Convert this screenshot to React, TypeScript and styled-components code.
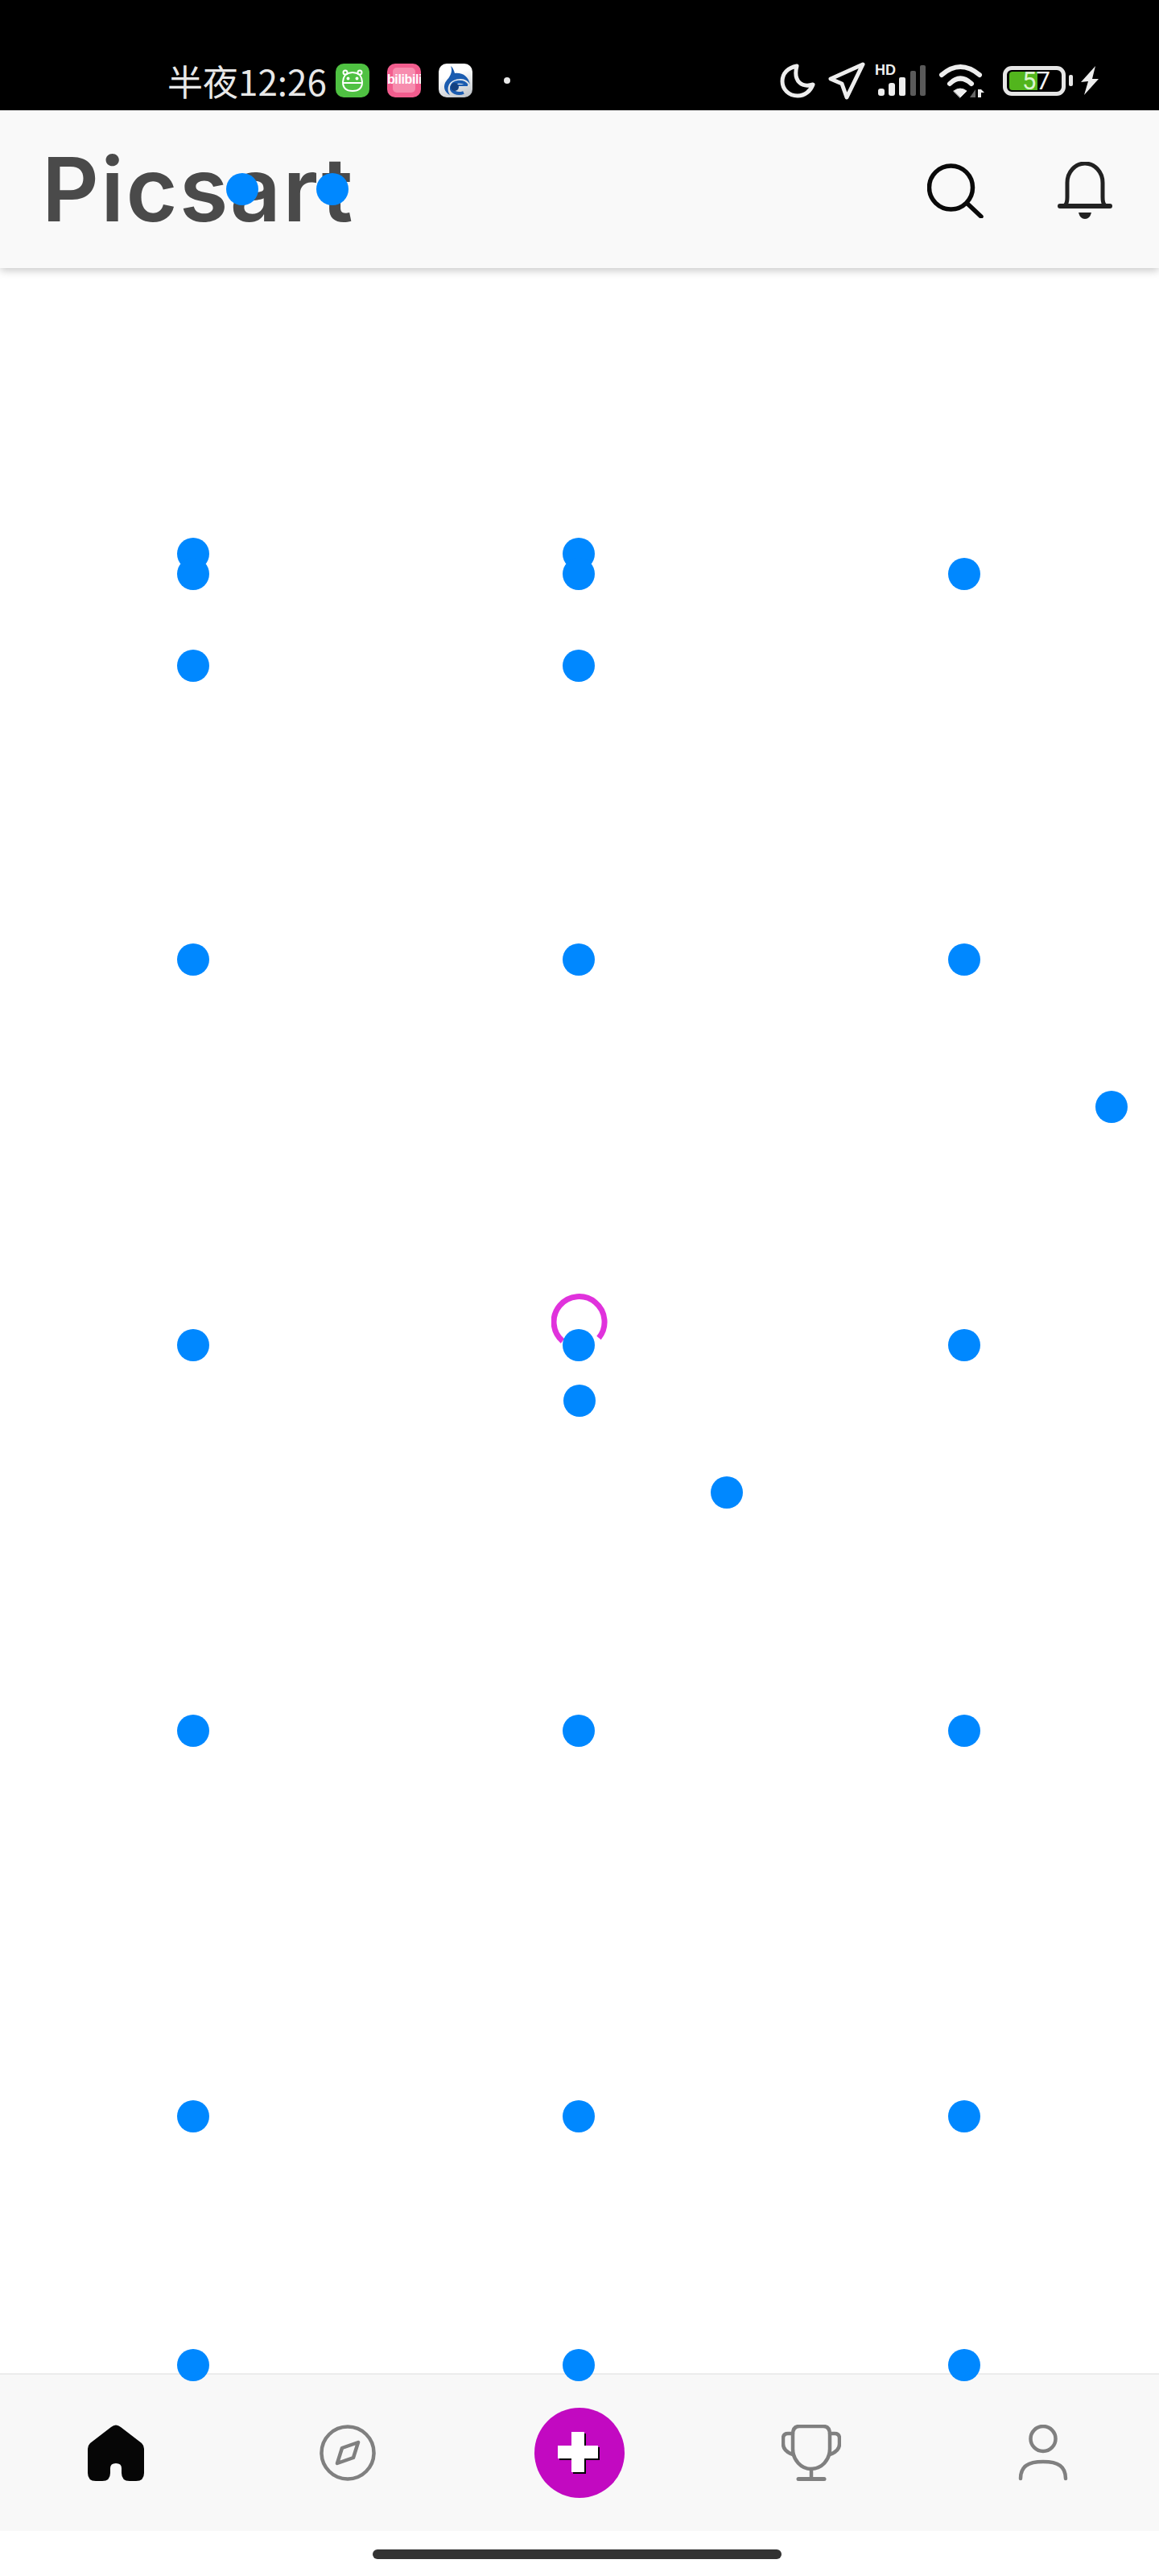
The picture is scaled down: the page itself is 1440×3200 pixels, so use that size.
import React from 'react';
import styled, { createGlobalStyle } from 'styled-components';

const PINS = [
    [301, 235], [413, 235],
    [240, 688], [240, 713], [240, 827],
    [719, 688], [719, 713], [719, 827],
    [1198, 713],
    [240, 1192], [719, 1192], [1198, 1192],
    [1381, 1375],
    [240, 1671], [719, 1671], [1198, 1671],
    [720, 1740], [903, 1854],
    [240, 2150], [719, 2150], [1198, 2150],
    [240, 2629], [719, 2629], [1198, 2629],
    [240, 2938], [719, 2938], [1198, 2938],
];

function App() {
    return (
        <Page>
            <GlobalStyle />
            <StatusBar>
                <Clock>半夜12:26</Clock>
                <AppBadges>
                    <AppBadge $bg="#4fc142">
                        <svg width="42" height="42" viewBox="0 0 42 42" fill="none" stroke="#fff" strokeWidth="2">
                            <path d="M12 14 Q21 8 30 14 Q33 18 33 23 Q33 34 21 34 Q9 34 9 23 Q9 18 12 14Z" />
                            <path d="M9 24 H33" />
                            <circle cx="12" cy="11" r="2.5" />
                            <circle cx="30" cy="11" r="2.5" />
                            <circle cx="15.5" cy="18.5" r="1" fill="#fff" />
                            <circle cx="26.5" cy="18.5" r="1" fill="#fff" />
                        </svg>
                    </AppBadge>
                    <AppBadge $bg="#f25d8e">
                        <BiliScreen />
                        <BiliText>bilibili</BiliText>
                    </AppBadge>
                    <AppBadge $bg="linear-gradient(160deg, #ffffff 35%, #b9bec4 100%)">
                        <svg width="42" height="42" viewBox="0 0 42 42" fill="none">
                            <path d="M15 3 C17 8 16 12 13 17 C11 20 7 23 7 29 C7 33 10 37 14 39 C11 34 11 30 13 26 C15 22 21 19 27 19 C33 19 37 22 39 26 C37 16 30 11 20 12 C19 9 18 5 15 3Z" fill="#1b5cb0" />
                            <path d="M35 27 C31 21 18 21 16 29 C15 35 23 39 31 36" stroke="#1b5cb0" strokeWidth="4" />
                            <path d="M24 27 H36" stroke="#1b5cb0" strokeWidth="2" />
                            <circle cx="20" cy="29" r="5" fill="#14407f" />
                        </svg>
                    </AppBadge>
                </AppBadges>
                <StatusDot />
                <StatusTray>
                    <TrayIcon width="44" height="44" viewBox="0 0 44 44" fill="none" stroke="#eee" strokeWidth="5" strokeLinejoin="round">
                        <path d="M21 4 C10 6 3 13 3 23 C3 33 11 41 22 41 C31 41 38 35 41 27 C28 31 16 24 21 4Z" />
                    </TrayIcon>
                    <TrayIcon $left={16} width="46" height="47" viewBox="0 0 46 47" fill="none" stroke="#eee" strokeWidth="5" strokeLinejoin="round">
                        <path d="M43 3 L3 21 L17 27 L23 44Z" />
                    </TrayIcon>
                    <TrayIcon $left={12} width="64" height="44" viewBox="0 0 64 44">
                        <HdLabel x="0" y="15">HD</HdLabel>
                        <rect x="4" y="32" width="8" height="9" rx="3" fill="#eee" />
                        <rect x="17" y="25" width="8" height="16" rx="3" fill="#eee" />
                        <rect x="30" y="18" width="8" height="23" rx="2" fill="#eee" />
                        <rect x="44" y="10" width="7" height="31" rx="2" fill="#5a5a5a" />
                        <rect x="56" y="3" width="7" height="38" rx="2" fill="#5a5a5a" />
                    </TrayIcon>
                    <TrayIcon $left={16} width="58" height="44" viewBox="0 0 58 44" fill="none" stroke="#eee" strokeWidth="6" strokeLinecap="round">
                        <path d="M3 15 Q26 -5 50 15" />
                        <path d="M13 26 Q26 13 40 26" />
                        <path d="M18 35 Q26 29 34 35 L26 43Z" fill="#eee" strokeWidth="1" />
                        <path d="M45 33 V43 H38Z" fill="#666" stroke="none" />
                        <path d="M48 43 V33 H52 L56 37 H52 V43Z" fill="#eee" stroke="none" />
                    </TrayIcon>
                    <Battery>
                        <BatteryFill />
                        <BatteryLevel><span>5</span>7</BatteryLevel>
                    </Battery>
                    <BatteryTip />
                    <TrayIcon $left={10} width="23" height="36" viewBox="0 0 23 36">
                        <path d="M18 0 L0 20 L9 19 L4 36 L22 16 L14 16Z" fill="#eee" />
                    </TrayIcon>
                </StatusTray>
            </StatusBar>

            <Header>
                <Logo>Picsart</Logo>
                <HeaderActions>
                    <svg width="70" height="68" viewBox="0 0 70 68" fill="none" stroke="#0a0a0a" strokeWidth="5.5" strokeLinecap="round">
                        <circle cx="29.5" cy="30" r="27" />
                        <path d="M50 50 L67 66" />
                    </svg>
                    <svg width="68" height="72" viewBox="0 0 68 72" fill="none" stroke="#222" strokeWidth="5" strokeLinecap="round">
                        <path d="M3 55 H65" strokeWidth="6" />
                        <path d="M9 54 Q12 52 12 44 V26 A22 24 0 0 1 56 26 V44 Q56 52 59 54" />
                        <path d="M26 63 H42 Q40 71 34 71 Q28 71 26 63Z" fill="#222" stroke="none" />
                    </svg>
                </HeaderActions>
            </Header>

            <Feed />

            <BottomNav>
                <NavItem>
                    <svg width="70" height="70" viewBox="0 0 70 70">
                        <path d="M29 3 Q35 -2 41 3 L67 23 Q70 26 70 30 V60 Q70 70 60 70 H52 Q42 70 42 60 V54 Q42 48 35 48 Q28 48 28 54 V60 Q28 70 18 70 H10 Q0 70 0 60 V30 Q0 26 3 23Z" fill="#060606" />
                    </svg>
                </NavItem>
                <NavItem>
                    <svg width="70" height="70" viewBox="0 0 70 70" fill="none" stroke="#808080" strokeWidth="4.5" strokeLinejoin="round">
                        <circle cx="35" cy="35" r="32.5" />
                        <path d="M48 22 L28 29 L22 48 L42 41Z" />
                    </svg>
                </NavItem>
                <NavItem>
                    <CreateButton>
                        <svg width="56" height="52" viewBox="0 0 56 52">
                            <path d="M20 2 H36 V19 H53 V35 H36 V52 H20 V35 H3 V19 H20Z" fill="#000" />
                            <path d="M18 0 H34 V17 H51 V33 H34 V50 H18 V33 H1 V17 H18Z" fill="#fff" />
                        </svg>
                    </CreateButton>
                </NavItem>
                <NavItem>
                    <svg width="74" height="70" viewBox="0 0 74 70" fill="none" stroke="#808080" strokeWidth="4.5" strokeLinecap="round">
                        <path d="M22 2 H52 Q60 2 60 12 V30 A23 25 0 0 1 14 30 V12 Q14 2 22 2Z" />
                        <path d="M14 11 H8 Q2 11 2 17 V24 Q2 33 14 37" />
                        <path d="M60 11 H66 Q72 11 72 17 V24 Q72 33 60 37" />
                        <path d="M37 55 V66" />
                        <path d="M21 67.5 H53" strokeWidth="5" />
                    </svg>
                </NavItem>
                <NavItem>
                    <svg width="62" height="70" viewBox="0 0 62 70" fill="none" stroke="#808080" strokeWidth="4.5" strokeLinecap="round">
                        <ellipse cx="31" cy="17.5" rx="15.5" ry="15.5" />
                        <path d="M3 67 C3 52 12 46 31 46 C50 46 59 52 59 67" />
                    </svg>
                </NavItem>
            </BottomNav>

            <HomeArea>
                <HomeBar />
            </HomeArea>

            <PinLayer>
                <LoadingRing width="70" height="70" viewBox="0 0 70 70" fill="none" stroke="#e032dc" strokeWidth="7">
                    <path d="M59 56 A31.5 31.5 0 1 0 14 60" />
                </LoadingRing>
                {PINS.map(([x, y]) => (
                    <Pin key={`${x}-${y}`} $x={x} $y={y} />
                ))}
            </PinLayer>
        </Page>
    );
}

const GlobalStyle = createGlobalStyle`
    html, body {
        margin: 0;
        padding: 0;
        background: #fff;
    }
`

const Page = styled.div`
    position: relative;
    display: flex;
    flex-direction: column;
    width: 1440px;
    height: 3200px;
    overflow: hidden;
    background: #fff;
    font-family: "Noto Sans CJK SC", "Noto Sans", sans-serif;
`

const StatusBar = styled.div`
    display: flex;
    align-items: center;
    height: 137px;
    padding: 63px 74px 0 208px;
    box-sizing: border-box;
    background: #000;
    flex: none;
`

const Clock = styled.div`
    width: 209px;
    flex: none;
    color: #e8e8e8;
    font-size: 44px;
    line-height: 48px;
    white-space: nowrap;
`

const AppBadges = styled.div`
    display: flex;
    gap: 22px;
`

const AppBadge = styled.div<{ $bg: string }>`
    position: relative;
    width: 42px;
    height: 42px;
    border-radius: 10px;
    overflow: hidden;
    background: ${props => props.$bg};
`

const BiliScreen = styled.div`
    position: absolute;
    left: 7px;
    top: 5px;
    width: 28px;
    height: 31px;
    border-radius: 5px;
    background: #f78cae;
`

const BiliText = styled.div`
    position: absolute;
    left: 0;
    right: 0;
    top: 10px;
    color: #fff;
    font-family: "Liberation Sans", sans-serif;
    font-weight: bold;
    font-size: 16px;
    line-height: 20px;
    letter-spacing: -0.4px;
    text-align: center;
`

const StatusDot = styled.div`
    width: 8px;
    height: 8px;
    margin-left: 39px;
    border-radius: 50%;
    background: #e8e8e8;
`

const StatusTray = styled.div`
    display: flex;
    align-items: center;
    margin-left: auto;
`

const TrayIcon = styled.svg<{ $left?: number }>`
    display: block;
    flex: none;
    margin-left: ${props => props.$left || 0}px;
`

const HdLabel = styled.text`
    fill: #eee;
    font-family: "Liberation Sans", sans-serif;
    font-weight: bold;
    font-size: 18px;
`

const Battery = styled.div`
    position: relative;
    width: 78px;
    height: 37px;
    margin-left: 21px;
    box-sizing: border-box;
    border: 5px solid #e6e6e6;
    border-radius: 11px;
    flex: none;
`

const BatteryFill = styled.div`
    position: absolute;
    left: 3px;
    top: 2px;
    width: 35px;
    height: 23px;
    border-radius: 4px 0 0 4px;
    background: #52b51d;
`

const BatteryLevel = styled.div`
    position: absolute;
    left: 19px;
    top: -4px;
    color: #f4f4f4;
    font-family: "Roboto", sans-serif;
    font-size: 31px;
    line-height: 36px;

    span {
        color: #dcf5cf;
    }
`

const BatteryTip = styled.div`
    width: 5px;
    height: 14px;
    margin-left: 4px;
    border-radius: 2px;
    background: #e6e6e6;
`

const Header = styled.header`
    position: relative;
    display: flex;
    align-items: center;
    justify-content: space-between;
    height: 196px;
    padding: 0 58px 0 52px;
    box-sizing: border-box;
    background: #f9f9f9;
    box-shadow: 0 3px 10px rgba(0, 0, 0, 0.22);
    flex: none;
`

const Logo = styled.div`
    color: #4a4a4a;
    font-family: "Inter", sans-serif;
    font-weight: 600;
    font-size: 110px;
    line-height: 120px;
    letter-spacing: 2.4px;
`

const HeaderActions = styled.div`
    display: flex;
    align-items: center;
    gap: 92px;
    margin-top: 4px;
`

const Feed = styled.main`
    flex: 1;
    background: #fff;
`

const BottomNav = styled.nav`
    display: grid;
    grid-template-columns: repeat(5, 1fr);
    align-items: center;
    height: 196px;
    box-sizing: border-box;
    border-top: 2px solid #ececec;
    background: #f8f8f8;
    flex: none;
`

const NavItem = styled.div`
    display: flex;
    align-items: center;
    justify-content: center;
    height: 100%;
`

const CreateButton = styled.div`
    display: flex;
    align-items: center;
    justify-content: center;
    width: 112px;
    height: 112px;
    border-radius: 50%;
    background: #c209c1;
`

const HomeArea = styled.div`
    height: 56px;
    padding: 23px 0 0 463px;
    box-sizing: border-box;
    background: #fff;
    flex: none;
`

const HomeBar = styled.div`
    width: 508px;
    height: 12px;
    border-radius: 6px;
    background: #333;
`

const PinLayer = styled.div`
    position: absolute;
    inset: 0;
    pointer-events: none;
`

const Pin = styled.div<{ $x: number; $y: number }>`
    position: absolute;
    left: ${props => props.$x - 20}px;
    top: ${props => props.$y - 20}px;
    width: 40px;
    height: 40px;
    border-radius: 50%;
    background: #0088ff;
`

const LoadingRing = styled.svg`
    position: absolute;
    left: 685px;
    top: 1606px;
`

export default App;
